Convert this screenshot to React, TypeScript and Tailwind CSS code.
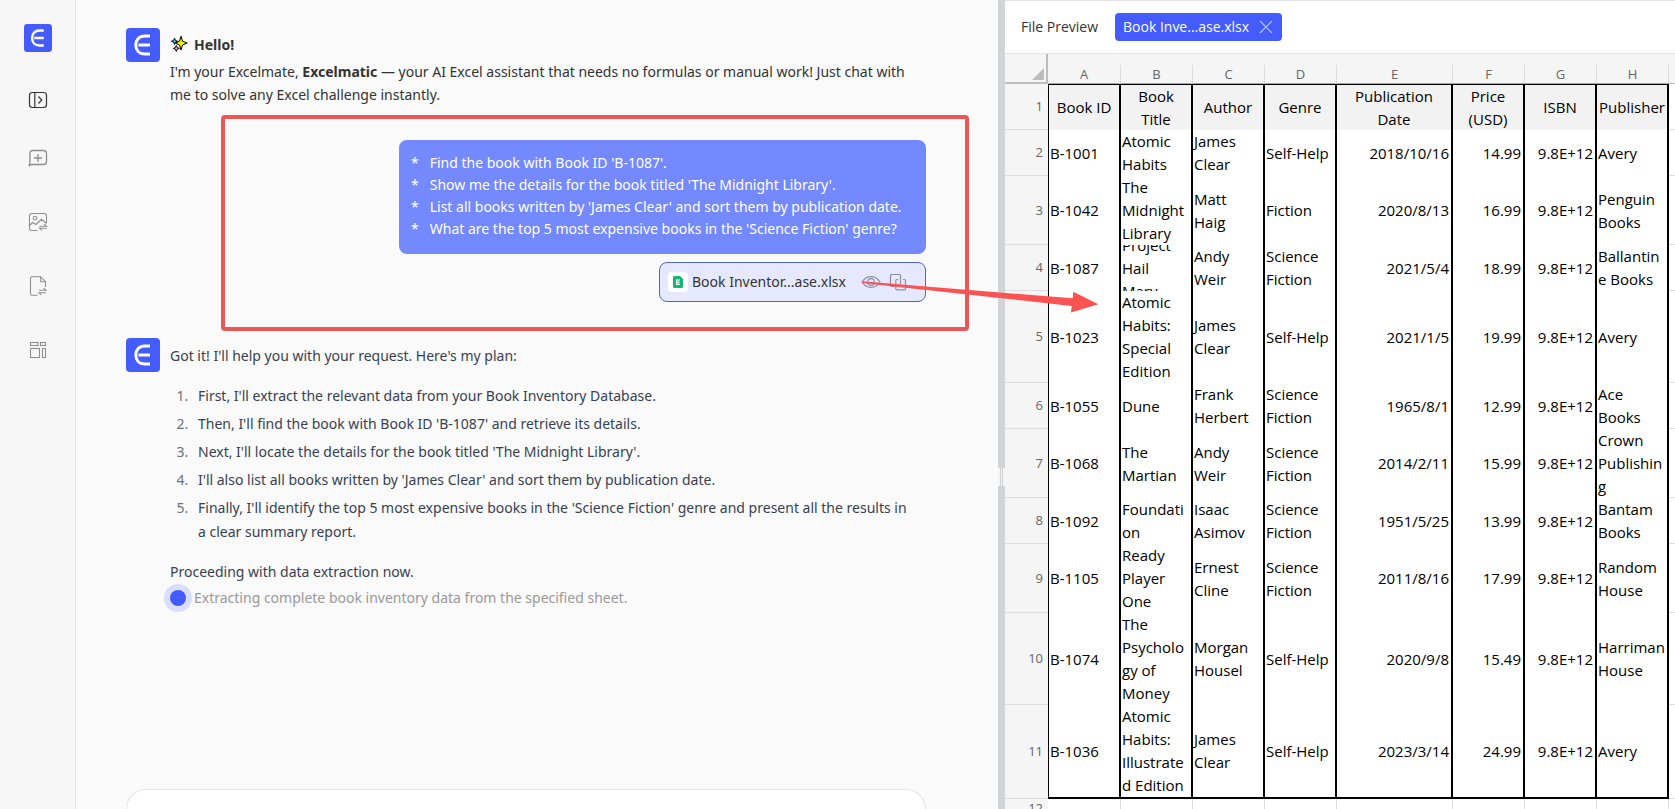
import React from "react";

function Logo({ className }: { className: string }) {
  return (
    <svg viewBox="0 0 34 34" className={className} role="img" aria-label="Excelmatic">
      <rect width="34" height="34" rx="4" fill="#445cfe" />
      <path d="M24 8h-5.200C13.200 8 9.800 11.800 9.800 17s3.400 9 9 9H24" fill="none" stroke="#fff" strokeWidth="3" />
      <path d="M12.500 17H24" stroke="#fff" strokeWidth="3" />
    </svg>
  );
}

function Sparkles() {
  return (
    <svg viewBox="0 0 18 18" className="h-[18px] w-[18px]" aria-hidden="true" stroke="#000" strokeWidth="1" strokeLinejoin="round">
      <path d="M4.500 3.200l.9 2.200 2.200.9-2.200.9-.9 2.200-.9-2.200-2.200-.9 2.200-.9z" fill="#35c3e8" />
      <path d="M6.300 10.400l.9 2.100 2.100.9-2.100.9-.9 2.100-.9-2.100-2.100-.9 2.100-.9z" fill="#f39bc0" />
      <path d="M11 1.200l1.500 5 4.600 1.900-4.600 1.900-1.500 5-1.500-5-4.200-1.900 4.200-1.900z" fill="#fff100" />
    </svg>
  );
}

const iconBase = "h-6 w-6 fill-none";

function PanelIcon() {
  return (
    <svg viewBox="0 0 24 24" className={iconBase} stroke="#333" strokeWidth="1.200">
      <rect x="3.500" y="4.500" width="17" height="15" rx="3" />
      <path d="M8.800 4.500v15M12.500 8.500L15.800 12l-3.300 3.500" />
    </svg>
  );
}
function ChatPlusIcon() {
  return (
    <svg viewBox="0 0 24 24" className={iconBase} stroke="#8f8f8f" strokeWidth="1.300">
      <path d="M2.500 19.600c1-.6 1.400-1.400 1.400-2.600V7.500a3 3 0 0 1 3-3h10.600a3 3 0 0 1 3 3v8a3 3 0 0 1-3 3H7c-1.600 0-2.700.3-4.500 1.100z" />
      <path d="M12 8v8M8 12h8" />
    </svg>
  );
}
function ImageSwapIcon() {
  return (
    <svg viewBox="0 0 24 24" className={iconBase} stroke="#8f8f8f" strokeWidth="1.100">
      <path d="M11.500 20.500H6a2.500 2.500 0 0 1-2.500-2.500V6A2.500 2.500 0 0 1 6 3.500h12A2.500 2.500 0 0 1 20.500 6v7" />
      <circle cx="9" cy="8" r="1.800" />
      <path d="M3.500 15.500l3.200-3 3.300 2 5.500-5.200 5 4.200M13.500 16.200h7l-2.400-2M20.500 18.300h-7l2.400 2" />
    </svg>
  );
}
function FileSwapIcon() {
  return (
    <svg viewBox="0 0 24 24" className={iconBase} stroke="#8f8f8f" strokeWidth="1.100">
      <path d="M11.500 21.300H6a1.500 1.500 0 0 1-1.500-1.500V4.200A1.500 1.500 0 0 1 6 2.700h8.700l4.800 5v5.300M14.700 2.700v5h4.800" />
      <path d="M13 16.200h7l-2.400-2M20 18.800h-7l2.400 2" />
    </svg>
  );
}
function LayoutIcon() {
  return (
    <svg viewBox="0 0 24 24" className={iconBase} stroke="#8f8f8f" strokeWidth="1.100">
      <rect x="4.500" y="4.500" width="7.500" height="3" />
      <rect x="14.500" y="4.500" width="5" height="3" />
      <rect x="4.500" y="10.500" width="9" height="9" />
      <rect x="16.500" y="10.500" width="3" height="9" />
    </svg>
  );
}

const navItems = [
  { label: "New chat", icon: <ChatPlusIcon /> },
  { label: "Image convert", icon: <ImageSwapIcon /> },
  { label: "File convert", icon: <FileSwapIcon /> },
  { label: "Templates", icon: <LayoutIcon /> },
];

function Sidebar() {
  return (
    <nav aria-label="Main" className="flex w-[76px] shrink-0 flex-col items-center border-r border-[#e2e2e2] bg-[#f7f7f7] pt-6">
      <Logo className="h-7 w-7" />
      <button type="button" aria-label="Expand sidebar" className="mt-7 mb-1.5 flex h-10 w-10 items-center justify-center">
        <PanelIcon />
      </button>
      {navItems.map((n) => (
        <button key={n.label} type="button" aria-label={n.label} className="flex h-16 w-10 items-center justify-center">
          {n.icon}
        </button>
      ))}
    </nav>
  );
}

const prompts = [
  "Find the book with Book ID 'B-1087'.",
  "Show me the details for the book titled 'The Midnight Library'.",
  "List all books written by 'James Clear' and sort them by publication date.",
  "What are the top 5 most expensive books in the 'Science Fiction' genre?",
];

const plan = [
  "First, I'll extract the relevant data from your Book Inventory Database.",
  "Then, I'll find the book with Book ID 'B-1087' and retrieve its details.",
  "Next, I'll locate the details for the book titled 'The Midnight Library'.",
  "I'll also list all books written by 'James Clear' and sort them by publication date.",
  "Finally, I'll identify the top 5 most expensive books in the 'Science Fiction' genre and present all the results in a clear summary report.",
];

function FileChip() {
  return (
    <div className="flex h-10 w-[267px] items-center rounded-lg border border-[#4f63d8] bg-[#e6e9fe] pl-2 text-[#333]">
      <span className="flex h-5 w-5 items-center justify-center rounded bg-white">
        <svg viewBox="0 0 10 12" className="h-3 w-2.5" aria-hidden="true">
          <path d="M1.500 0h5.500l3 3v7.500A1.500 1.500 0 0 1 8.500 12h-7A1.500 1.500 0 0 1 0 10.500v-9A1.500 1.500 0 0 1 1.500 0z" fill="#10b870" />
          <path d="M7 4H3.600v4.400H7M3.600 6.200h3" fill="none" stroke="#fff" strokeWidth="1.200" />
        </svg>
      </span>
      <span className="w-[173px] pb-0.5 pl-1">Book Inventor...ase.xlsx</span>
      <button type="button" aria-label="Preview file" className="mr-2">
        <svg viewBox="0 0 20 20" className="h-5 w-5 fill-none" stroke="#8b8fa5" strokeWidth="1.200">
          <path d="M1 10c2.200-3.600 5.200-5.400 9-5.400s6.800 1.800 9 5.400c-2.200 3.600-5.200 5.400-9 5.400S3.200 13.600 1 10z" />
          <circle cx="10" cy="10" r="3.300" />
        </svg>
      </button>
      <button type="button" aria-label="Copy file">
        <svg viewBox="0 0 18 18" className="h-[18px] w-[18px] fill-none" stroke="#8b8fa5" strokeWidth="1.200">
          <path d="M6 13.500H2.500A1 1 0 0 1 1.500 12.500V2.500A1 1 0 0 1 2.500 1.500h8A1 1 0 0 1 11.500 2.500V11" />
          <path d="M9 6.500H8A1.200 1.200 0 0 0 6.800 7.700v8A1.200 1.200 0 0 0 8 16.900h7.300a1.200 1.200 0 0 0 1.200-1.200v-8a1.200 1.200 0 0 0-1.200-1.200H14" />
        </svg>
      </button>
    </div>
  );
}

function Chat() {
  return (
    <main className="flex w-[922px] shrink-0 flex-col bg-[#fafafa] pr-[72px] pl-[50px] font-['Noto_Sans','Open_Sans',sans-serif] text-[14px] text-[#333]">
      <div className="flex min-h-0 flex-1 flex-col pt-7">
        <article className="flex gap-2.5">
          <Logo className="h-[34px] w-[34px] shrink-0" />
          <div className="pt-1 pr-3">
            <h1 className="mb-1 flex h-6 items-center gap-1.5 font-bold">
              <Sparkles />
              Hello!
            </h1>
            <p className="leading-[23px]">
              I'm your Excelmate, <b>Excelmatic</b> — your AI Excel assistant that needs no formulas or manual work! Just chat with
              me to solve any Excel challenge instantly.
            </p>
          </div>
        </article>

        <div className="mt-[34px] flex flex-col items-end gap-2">
          <ul className="w-[527px] rounded-lg bg-[#7489fe] px-3 pt-3 pb-[14px] leading-[22px] text-white">
            {prompts.map((p) => (
              <li key={p} className="flex gap-[11px]">
                <span>*</span>
                <span className="whitespace-nowrap">{p}</span>
              </li>
            ))}
          </ul>
          <FileChip />
        </div>

        <article className="mt-9 flex gap-2.5 leading-6 text-[#374151]">
          <Logo className="h-[34px] w-[34px] shrink-0" />
          <div className="pt-1.5 pr-3">
            <p>Got it! I'll help you with your request. Here's my plan:</p>
            <ol className="my-4 flex list-decimal flex-col gap-1 pl-[22px] marker:text-[#6b7280]">
              {plan.map((p) => (
                <li key={p} className="pl-1.5">{p}</li>
              ))}
            </ol>
            <p>Proceeding with data extraction now.</p>
            <div className="-ml-1.5 flex items-center gap-0.5 text-[#999]">
              <span className="flex h-7 w-7 items-center justify-center rounded-full bg-[#dadefd]">
                <span className="h-4 w-4 rounded-full bg-[#445cfe]" />
              </span>
              Extracting complete book inventory data from the specified sheet.
            </div>
          </div>
        </article>
      </div>
      <div className="h-5 shrink-0 overflow-hidden rounded-t-[20px] border border-b-0 border-[#e4e4e4] bg-white">
        <textarea aria-label="Message" className="block w-full resize-none px-5 outline-none" />
      </div>
    </main>
  );
}

const letters = ["A", "B", "C", "D", "E", "F", "G", "H"];
const heads = ["Book ID", "Book\nTitle", "Author", "Genre", "Publication\nDate", "Price\n(USD)", "ISBN", "Publisher"];
const rows: { h: string; cells: string[] }[] = [
  { h: "h-[46px]", cells: ["B-1001", "Atomic Habits", "James Clear", "Self-Help", "2018/10/16", "14.99", "9.8E+12", "Avery"] },
  { h: "h-[69px]", cells: ["B-1042", "The Midnight Library", "Matt Haig", "Fiction", "2020/8/13", "16.99", "9.8E+12", "Penguin Books"] },
  { h: "h-[46px]", cells: ["B-1087", "Project\nHail\nMary", "Andy Weir", "Science Fiction", "2021/5/4", "18.99", "9.8E+12", "Ballantine Books"] },
  { h: "h-[92px]", cells: ["B-1023", "Atomic Habits: Special Edition", "James Clear", "Self-Help", "2021/1/5", "19.99", "9.8E+12", "Avery"] },
  { h: "h-[46px]", cells: ["B-1055", "Dune", "Frank Herbert", "Science Fiction", "1965/8/1", "12.99", "9.8E+12", "Ace Books"] },
  { h: "h-[69px]", cells: ["B-1068", "The Martian", "Andy Weir", "Science Fiction", "2014/2/11", "15.99", "9.8E+12", "Crown Publishing"] },
  { h: "h-[46px]", cells: ["B-1092", "Foundation", "Isaac Asimov", "Science Fiction", "1951/5/25", "13.99", "9.8E+12", "Bantam Books"] },
  { h: "h-[69px]", cells: ["B-1105", "Ready Player One", "Ernest Cline", "Science Fiction", "2011/8/16", "17.99", "9.8E+12", "Random House"] },
  { h: "h-[92px]", cells: ["B-1074", "The Psychology of Money", "Morgan Housel", "Self-Help", "2020/9/8", "15.49", "9.8E+12", "Harriman House"] },
  { h: "h-[92px]", cells: ["B-1036", "Atomic Habits: Illustrated Edition", "James Clear", "Self-Help", "2023/3/14", "24.99", "9.8E+12", "Avery"] },
];

const rowHead = "border-b border-[#dedede] bg-[#f5f5f5] py-0 pr-[5px] pl-0 text-right align-middle text-[13px] font-normal text-[#666]";

function Sheet() {
  return (
    <table className="w-full table-fixed border-separate border-spacing-0 text-[15px] leading-[23px] text-black">
      <colgroup>
        <col className="w-[43px]" />
        <col className="w-[73px]" />
        <col className="w-[72px]" />
        <col className="w-[72px]" />
        <col className="w-[72px]" />
        <col className="w-[116px]" />
        <col className="w-[72px]" />
        <col className="w-[72px]" />
        <col className="w-[72px]" />
        <col />
      </colgroup>
      <thead>
        <tr className="h-[30px] bg-[#f5f5f5] text-[13px] text-[#666]">
          <td className="border-r-2 border-b-2 border-[#bdbdbd] p-0 align-bottom">
            <svg viewBox="0 0 12 12" className="mr-0.5 mb-0.5 ml-auto h-3 w-3" aria-hidden="true">
              <path d="M12 0v12H0z" fill="#bdbdbd" />
            </svg>
          </td>
          {letters.map((l) => (
            <th key={l} scope="col" className="border-b border-[#a8a8a8] p-0 align-bottom font-normal">
              <div className="h-[18px] border-r border-[#dcdcdc] leading-[18px]">{l}</div>
            </th>
          ))}
          <td className="border-b border-[#bdbdbd] p-0" />
        </tr>
      </thead>
      <tbody>
        <tr>
          <th scope="row" className={rowHead}>1</th>
          {heads.map((h, i) => (
            <th
              key={h}
              scope="col"
              className={`border-t border-r-2 border-black bg-[#f2f2f2] p-0 font-normal ${i === 0 ? "border-l" : ""}`}
            >
              <div className="flex h-[45px] items-center justify-center text-center whitespace-pre-line">{h}</div>
            </th>
          ))}
          <td className="border-b border-[#dedede] p-0" />
        </tr>
        {rows.map((r, ri) => (
          <tr key={r.cells[0]}>
            <th scope="row" className={rowHead}>{ri + 2}</th>
            {r.cells.map((c, i) => (
              <td
                key={letters[i]}
                className={`border-r-2 border-black p-0 ${i === 0 ? "border-l" : ""} ${ri === rows.length - 1 ? "border-b-2" : ""}`}
              >
                <div className={`flex items-center overflow-hidden pr-0.5 pl-px ${r.h} ${i >= 4 && i <= 6 ? "justify-end" : ""}`}>
                  <span className="min-w-0 wrap-anywhere whitespace-pre-line">{c}</span>
                </div>
              </td>
            ))}
            <td className="border-b border-[#dedede] p-0" />
          </tr>
        ))}
        <tr className="h-[19px] leading-[18px]">
          <th scope="row" className={rowHead}>12</th>
          {letters.map((l) => (
            <td key={l} className="border-r border-b border-[#dedede] p-0" />
          ))}
          <td className="border-b border-[#dedede] p-0" />
        </tr>
      </tbody>
    </table>
  );
}

function Preview() {
  return (
    <section
      aria-label="File preview"
      className="flex min-w-0 flex-1 flex-col overflow-hidden border-t border-[#e5e5e5] bg-white font-['Open_Sans','Noto_Sans',sans-serif]"
    >
      <header className="flex h-[53px] shrink-0 items-center border-b border-[#e5e5e5] pl-4 text-[14px] text-[#333]">
        <h2 className="w-[94px] pb-0.5">File Preview</h2>
        <div className="flex h-7 w-[167px] items-center justify-between rounded bg-[#445cfe] px-2 text-white">
          <span className="pb-0.5">Book Inve...ase.xlsx</span>
          <button type="button" aria-label="Close tab">
            <svg viewBox="0 0 16 16" className="h-4 w-4" stroke="#b5beff" strokeWidth="1.200">
              <path d="M2 2l12 12M14 2L2 14" />
            </svg>
          </button>
        </div>
      </header>
      <Sheet />
    </section>
  );
}

export default function App() {
  return (
    <div className="relative flex h-screen overflow-hidden">
      <Sidebar />
      <Chat />
      <div role="separator" className="flex w-[7px] shrink-0 flex-col items-center bg-[#d2d4d6] pt-[468px]">
        <div className="flex h-[18px] w-full justify-evenly bg-[#f4f4f4]">
          <span className="w-px bg-[#d0d0d0]" />
          <span className="w-px bg-[#d0d0d0]" />
        </div>
      </div>
      <Preview />
      <div className="pointer-events-none absolute top-[115px] left-[221px] h-[216px] w-[748px] rounded-sm border-4 border-[#eb5757]" />
      <svg viewBox="0 0 240 36" className="pointer-events-none absolute top-[280px] left-[860px] h-9 w-60" aria-hidden="true">
        <path d="M2 1.300L212.700 18.300l.6-6.600L238.300 24.300 211 32.500l.7-6.500L2 2.900z" fill="#fb5252" />
      </svg>
    </div>
  );
}
